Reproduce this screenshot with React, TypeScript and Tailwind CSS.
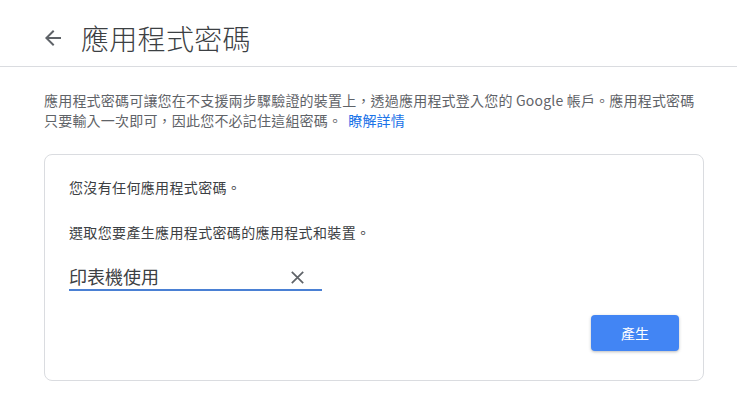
export default function App() {
  const font = { fontFamily: '"Noto Sans CJK TC", Roboto, "Noto Sans", sans-serif' };
  return (
    <div className="w-[737px] h-[407px] bg-white overflow-hidden" style={font}>
      {/* 標題 */}
      <div className="h-[67px] border-b border-[#dadce0] flex items-center pt-[9px] pl-[41px]">
        <svg width="24" height="24" viewBox="0 0 24 24" className="text-[#5f6368]">
          <path fill="currentColor" d="M20 11H7.83l5.59-5.59L12 4l-8 8 8 8 1.41-1.41L7.83 13H20v-2z" />
        </svg>
        <h1 className="ml-[16px] text-[28px] leading-[36px] text-[#3c4043] font-light tracking-[0.3px]">應用程式密碼</h1>
      </div>

      {/* 說明 */}
      <p className="ml-[44px] w-[660px] mt-[23px] text-[14px] leading-[20px] text-[#5f6368] tracking-[0.2px]">
        應用程式密碼可讓您在不支援兩步驟驗證的裝置上，透過應用程式登入您的 Google 帳戶。應用程式密碼只要輸入一次即可，因此您不必記住這組密碼。<a className="ml-[6px] text-[#1a73e8]">瞭解詳情</a>
      </p>

      {/* 卡片 */}
      <div className="ml-[44px] w-[660px] mt-[24px] border border-[#dadce0] rounded-lg px-6 pt-[22px] pb-[29px] flex flex-col">
        <p className="text-[14px] leading-[20px] text-[#3c4043] tracking-[0.35px]">您沒有任何應用程式密碼。</p>
        <p className="mt-[25px] text-[14px] leading-[20px] text-[#3c4043] tracking-[0.35px]">選取您要產生應用程式密碼的應用程式和裝置。</p>
        <div className="mt-[22px] w-[253px] flex items-center justify-between border-b-2 border-[#4a80d4] pb-[1px] pr-[18px]">
          <span className="text-[18px] leading-[24px] text-[#3c4043]">印表機使用</span>
          <svg width="13" height="13" viewBox="0 0 13 13" className="mt-[3px]">
            <path d="M0.8 0.8L12.2 12.2M12.2 0.8L0.8 12.2" stroke="#5f6368" strokeWidth="1.7" />
          </svg>
        </div>
        <div className="flex justify-end mt-[24px]">
          <button className="w-[88px] h-[36px] rounded bg-[#4285f4] text-white text-[14px] shadow-[0_1px_3px_rgba(60,64,67,0.35)]">
            產生
          </button>
        </div>
      </div>
    </div>
  );
}
